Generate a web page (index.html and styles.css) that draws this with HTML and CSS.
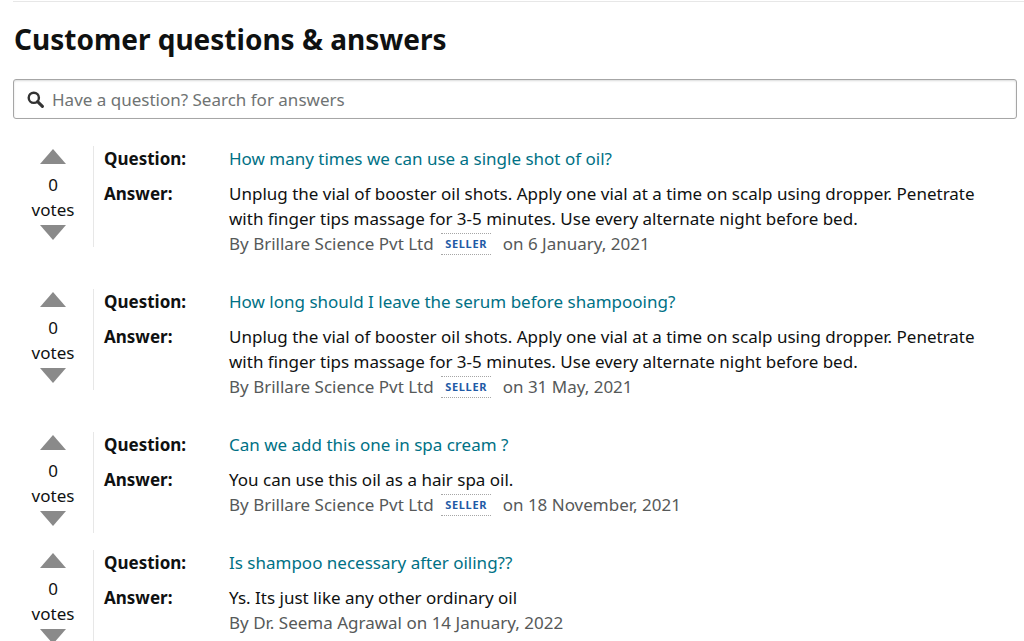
FILE: index.html
```html
<!DOCTYPE html>
<html>
<head>
    <title>Customer questions &amp; answers</title>
    <link rel="stylesheet" href="styles.css">
</head>
<body>
    <div class="qa-section">
        <h2 class="qa-title">Customer questions &amp; answers</h2>

        <!-- Search box -->
        <div class="qa-search">
            <svg class="search-icon" width="17" height="17" viewBox="0 0 17 17">
                <circle cx="6.8" cy="6.8" r="5.1" fill="none" stroke="#333" stroke-width="2.4"/>
                <path d="M10.6 10.6 L15.4 15.4" stroke="#333" stroke-width="3" stroke-linecap="round"/>
            </svg>
            <input type="text" class="search-input" placeholder="Have a question? Search for answers">
        </div>

        <!-- Question list -->
        <div class="qa-list">
            <div class="qa-item">
                <div class="vote">
                    <span class="arrow-up"></span>
                    <span class="vote-count">0</span>
                    <span class="vote-label">votes</span>
                    <span class="arrow-down"></span>
                </div>
                <div class="qa-body">
                    <div class="qa-row question">
                        <span class="qa-label">Question:</span>
                        <a class="qa-link" href="#">How many times we can use a single shot of oil?</a>
                    </div>
                    <div class="qa-row answer">
                        <span class="qa-label">Answer:</span>
                        <div class="qa-text">
                            Unplug the vial of booster oil shots. Apply one vial at a time on scalp using dropper. Penetrate with finger tips massage for 3-5 minutes. Use every alternate night before bed.
                            <div class="byline">By Brillare Science Pvt Ltd <span class="badge">SELLER</span> on 6 January, 2021</div>
                        </div>
                    </div>
                </div>
            </div>

            <div class="qa-item">
                <div class="vote">
                    <span class="arrow-up"></span>
                    <span class="vote-count">0</span>
                    <span class="vote-label">votes</span>
                    <span class="arrow-down"></span>
                </div>
                <div class="qa-body">
                    <div class="qa-row question">
                        <span class="qa-label">Question:</span>
                        <a class="qa-link" href="#">How long should I leave the serum before shampooing?</a>
                    </div>
                    <div class="qa-row answer">
                        <span class="qa-label">Answer:</span>
                        <div class="qa-text">
                            Unplug the vial of booster oil shots. Apply one vial at a time on scalp using dropper. Penetrate with finger tips massage for 3-5 minutes. Use every alternate night before bed.
                            <div class="byline">By Brillare Science Pvt Ltd <span class="badge">SELLER</span> on 31 May, 2021</div>
                        </div>
                    </div>
                </div>
            </div>

            <div class="qa-item">
                <div class="vote">
                    <span class="arrow-up"></span>
                    <span class="vote-count">0</span>
                    <span class="vote-label">votes</span>
                    <span class="arrow-down"></span>
                </div>
                <div class="qa-body">
                    <div class="qa-row question">
                        <span class="qa-label">Question:</span>
                        <a class="qa-link" href="#">Can we add this one in spa cream ?</a>
                    </div>
                    <div class="qa-row answer">
                        <span class="qa-label">Answer:</span>
                        <div class="qa-text">
                            You can use this oil as a hair spa oil.
                            <div class="byline">By Brillare Science Pvt Ltd <span class="badge">SELLER</span> on 18 November, 2021</div>
                        </div>
                    </div>
                </div>
            </div>

            <div class="qa-item">
                <div class="vote">
                    <span class="arrow-up"></span>
                    <span class="vote-count">0</span>
                    <span class="vote-label">votes</span>
                    <span class="arrow-down"></span>
                </div>
                <div class="qa-body">
                    <div class="qa-row question">
                        <span class="qa-label">Question:</span>
                        <a class="qa-link" href="#">Is shampoo necessary after oiling??</a>
                    </div>
                    <div class="qa-row answer">
                        <span class="qa-label">Answer:</span>
                        <div class="qa-text">
                            Ys. Its just like any other ordinary oil
                            <div class="byline">By Dr. Seema Agrawal on 14 January, 2022</div>
                        </div>
                    </div>
                </div>
            </div>
        </div>
    </div>
</body>
</html>
```
FILE: styles.css
```css
/* General Styles */
body {
    margin: 0;
    padding: 0;
    font-family: "Noto Sans", Arial, sans-serif;
    font-size: 17px;
    line-height: 25px;
    color: #0f1111;
    background-color: #ffffff;
    overflow: hidden;
}

.qa-section {
    margin: 1px 0 0 13px;
    padding-right: 7px;
    border-top: 1px solid #e7e7e7;
}

.qa-title {
    margin: 19px 0 0 1px;
    font-size: 28px;
    line-height: 36px;
    font-weight: 700;
}

/* Search box */
.qa-search {
    display: flex;
    align-items: center;
    margin-top: 22px;
    height: 38px;
    padding: 0 12px 0 13px;
    border: 1px solid #a6a6a6;
    border-radius: 3px;
    box-shadow: 0 1px 2px rgba(15, 17, 17, 0.15) inset;
}

.search-icon {
    flex: none;
    margin-right: 8px;
}

.search-input {
    flex: 1;
    border: none;
    outline: none;
    padding: 0;
    font-family: inherit;
    font-size: 17px;
    color: #0f1111;
    background: transparent;
}

.search-input::placeholder {
    color: #6f7373;
}

/* Question list */
.qa-list {
    margin-top: 27px;
}

.qa-item {
    display: flex;
    align-items: flex-start;
    margin-bottom: 33px;
    padding-right: 20px;
}

.vote {
    flex: none;
    width: 80px;
    display: flex;
    flex-direction: column;
    align-items: center;
    padding: 3px 0 7px;
    margin-bottom: -30px; /* lets the vote column hang below short answers */
    border-right: 1px solid #e7e7e7;
}

.arrow-up,
.arrow-down {
    width: 0;
    height: 0;
    border-left: 13px solid transparent;
    border-right: 13px solid transparent;
}

.arrow-up {
    border-bottom: 15px solid #8a8a8a;
    margin-bottom: 8px;
}

.arrow-down {
    border-top: 15px solid #8a8a8a;
    margin-top: 3px;
}

.qa-body {
    flex: 1;
    padding-left: 10px;
}

.qa-row {
    display: flex;
}

.qa-row.answer {
    margin-top: 10px;
}

.qa-label {
    flex: none;
    width: 125px;
    font-weight: 700;
}

.qa-link {
    color: #007185;
    text-decoration: none;
}

.qa-text {
    flex: 1;
}

.byline {
    color: #565959;
}

.badge {
    display: inline-block;
    vertical-align: middle;
    margin: -3px 7px 0 3px;
    padding: 0 4px;
    line-height: 20px;
    font-size: 11px;
    font-weight: 700;
    letter-spacing: 0.7px;
    color: #1f5aa6;
    border-top: 1px dotted #a6a6a6;
    border-bottom: 1px dotted #a6a6a6;
}
```
